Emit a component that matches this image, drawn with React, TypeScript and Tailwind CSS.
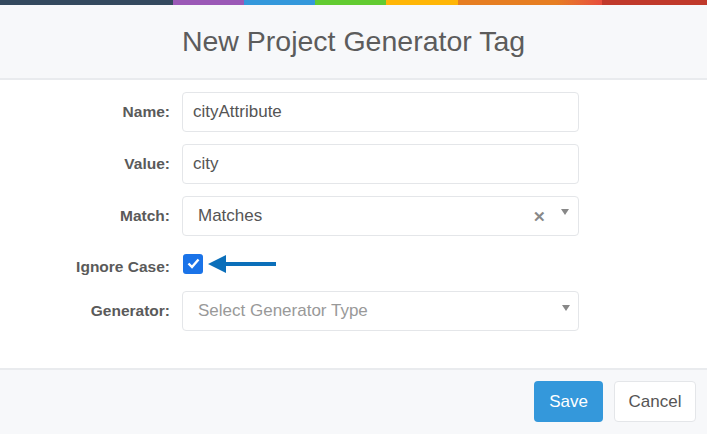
// New Project Generator Tag modal, rendered as a full-page dialog.

interface Field {
  readonly label: string;
  readonly value: string;
}

const TEXT_FIELDS: readonly Field[] = [
  { label: "Name:", value: "cityAttribute" },
  { label: "Value:", value: "city" },
];

function Caret(): JSX.Element {
  return (
    <svg width="8" height="6" viewBox="0 0 8 6" aria-hidden="true">
      <path d="M0 0h8L4 6z" fill="#888" />
    </svg>
  );
}

function Label({ children, className = "" }: { children: string; className?: string }): JSX.Element {
  return (
    <span
      className={`w-[170px] shrink-0 text-right text-[15.5px] font-bold text-[#5a5a5a] ${className}`}
    >
      {children}
    </span>
  );
}

export default function App(): JSX.Element {
  return (
    <div className="flex h-[434px] w-[707px] flex-col bg-white font-['Liberation_Sans',Arial,sans-serif]">
      <div className="flex h-[5px] shrink-0">
        <div className="w-[173px] bg-[#34495e]" />
        <div className="w-[71px] bg-[#9b59b6]" />
        <div className="w-[71px] bg-[#3498db]" />
        <div className="w-[71px] bg-[#62cb31]" />
        <div className="w-[72px] bg-[#ffb606]" />
        <div className="w-[98px] bg-[#e67e22]" />
        <div className="w-[46px] bg-gradient-to-r from-[#e67e22] to-[#e74c3c]" />
        <div className="flex-1 bg-[#c0392b]" />
      </div>

      <header className="flex h-[75px] shrink-0 items-center justify-center border-b-2 border-[#e9ebee] bg-[#f7f8fa]">
        <h1 className="text-[28.5px] text-[#5c5c5c]">New Project Generator Tag</h1>
      </header>

      <main className="flex flex-1 flex-col gap-3 pt-[12px]">
        {TEXT_FIELDS.map((field) => (
          <div key={field.label} className="flex items-center gap-3">
            <Label>{field.label}</Label>
            <div className="flex h-[40px] w-[397px] items-center rounded-[4px] border border-[#e4e6e9] px-[10px] text-[17px] text-[#555]">
              {field.value}
            </div>
          </div>
        ))}

        <div className="flex items-center gap-3">
          <Label>Match:</Label>
          <div className="flex h-[40px] w-[397px] items-center rounded-[4px] border border-[#e4e6e9] pl-[15px] pr-[9px] text-[17px] text-[#555]">
            <span className="flex-1">Matches</span>
            <span className="mr-[15px] text-[15px] font-bold leading-none text-[#888]">✕</span>
            <span className="-mt-[8px]">
              <Caret />
            </span>
          </div>
        </div>

        <div className="flex h-[31px] items-center gap-3">
          <Label className="mt-[7px]">Ignore Case:</Label>
          <div className="flex items-center">
            <span className="ml-[1px] flex h-[20px] w-[20px] items-center justify-center rounded-[3px] bg-[#1a73e8]">
              <svg width="13" height="11" viewBox="0 0 13 11" aria-hidden="true">
                <path d="M1.5 5.5l3.5 3.5 6.5-7.5" fill="none" stroke="#fff" strokeWidth="2.4" />
              </svg>
            </span>
            <svg className="ml-[5px]" width="68" height="22" viewBox="0 0 68 22" aria-hidden="true">
              <path d="M0 11L18 2v7h50v4H18v7z" fill="#0b6fba" />
            </svg>
          </div>
        </div>

        <div className="flex items-center gap-3">
          <Label>Generator:</Label>
          <div className="flex h-[40px] w-[397px] items-center rounded-[4px] border border-[#e4e6e9] pl-[15px] pr-[8px] text-[17px] text-[#999]">
            <span className="flex-1">Select Generator Type</span>
            <span className="-mt-[6px]">
              <Caret />
            </span>
          </div>
        </div>
      </main>

      <footer className="flex h-[66px] shrink-0 items-start justify-end gap-[11px] border-t-2 border-[#e9ebee] bg-[#f7f8fa] pr-[11px] pt-[11px]">
        <button className="h-[41px] w-[69px] rounded-[4px] bg-[#3498db] text-[17px] text-white">
          Save
        </button>
        <button className="h-[41px] w-[82px] rounded-[4px] border border-[#e4e6e9] bg-white text-[17px] text-[#555]">
          Cancel
        </button>
      </footer>
    </div>
  );
}
